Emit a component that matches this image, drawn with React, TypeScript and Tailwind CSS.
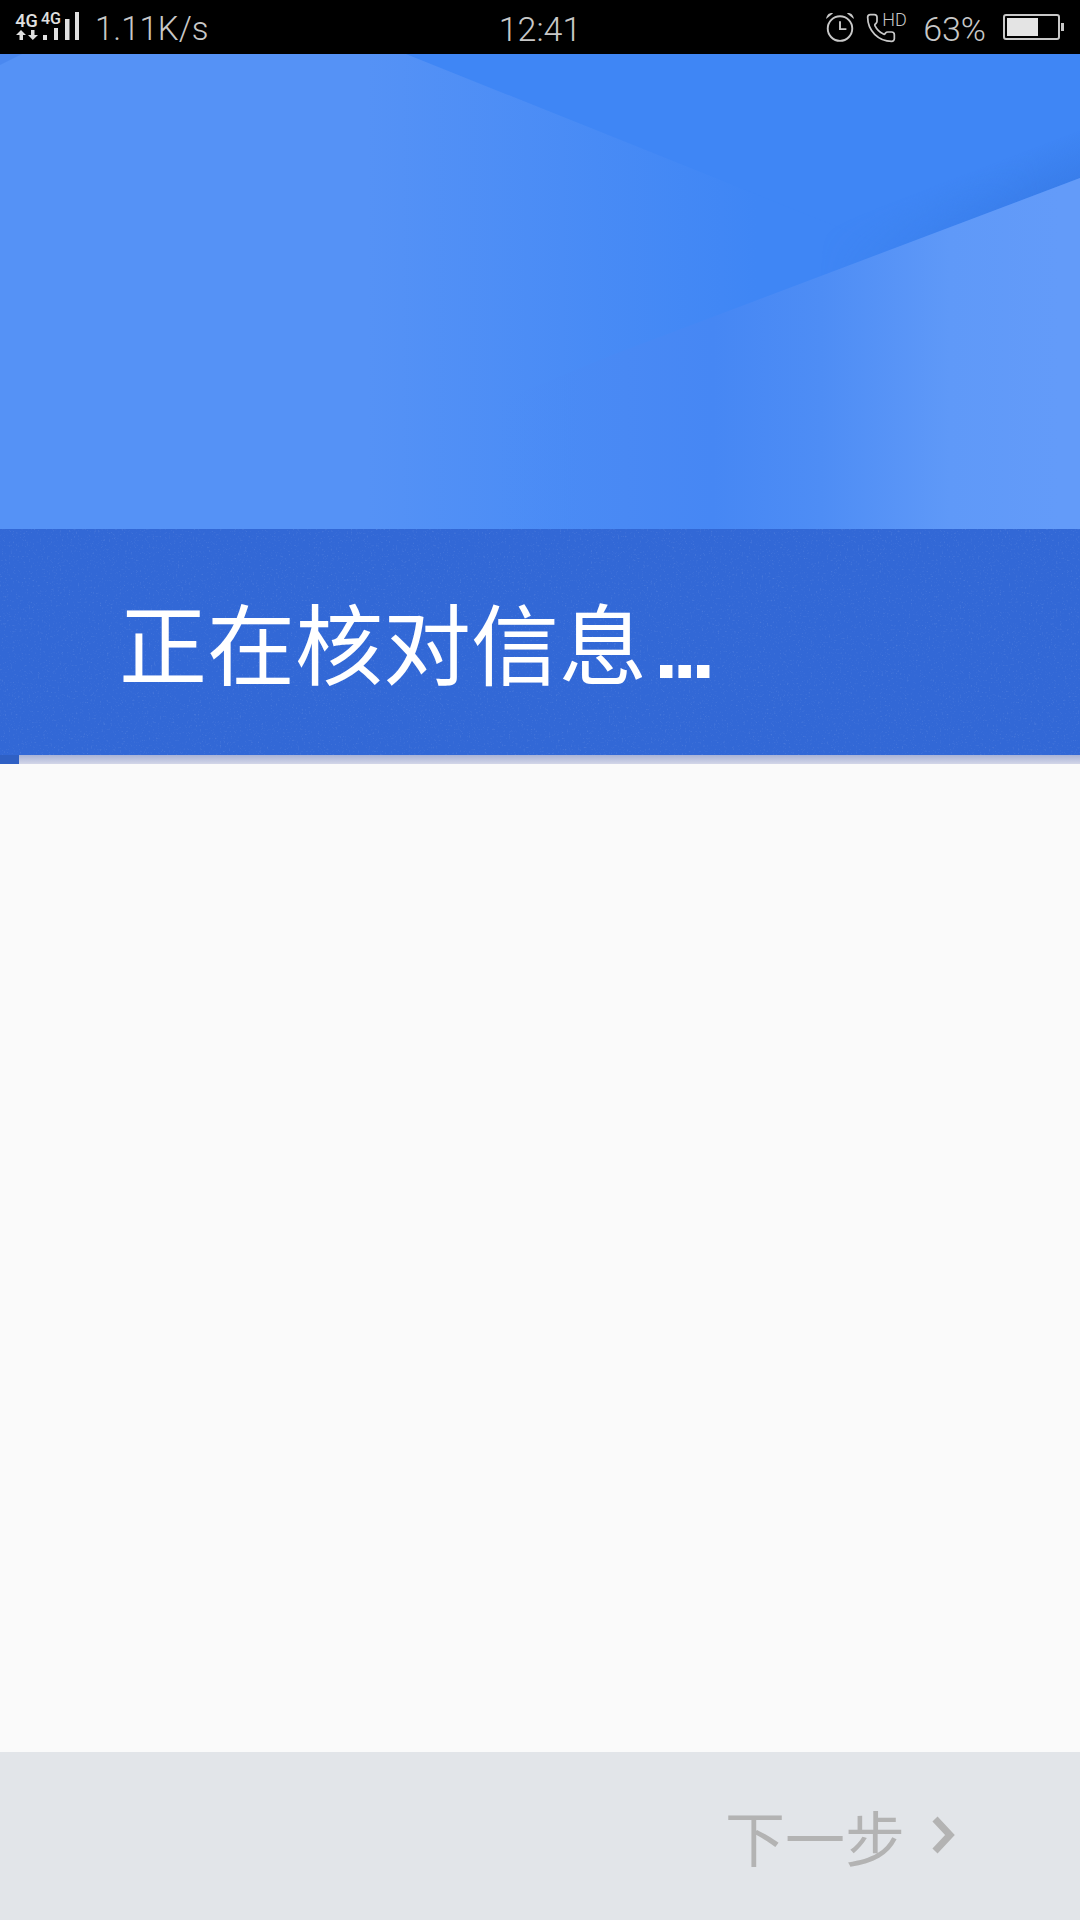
import { Phone } from "lucide-react";

function SignalCluster() {
  return (
    <div className="flex items-start gap-[2px] text-[#e0e0e0] font-['Roboto',sans-serif] font-medium">
      <div className="flex flex-col items-center w-[25px]">
        <span className="text-[18px] leading-[15px] h-[15px]">4G</span>
        <svg width="24" height="12" viewBox="0 0 24 12" className="mt-[1px] block" fill="currentColor">
          <path d="M6 1 L11 6 H8 V11 H4.500 V6 H1 Z" />
          <path d="M16 1 H19.500 V6 H23 L17.800 11 L13 6 H16 Z" />
        </svg>
      </div>
      <div className="flex flex-col w-[40px] -mt-[1px] relative">
        <span className="text-[16px] leading-[12px] h-[12px] absolute left-0 top-[1px]">4G</span>
        <svg width="40" height="28" viewBox="0 0 40 28" className="block" fill="currentColor">
          <rect x="2" y="23" width="4" height="5" />
          <rect x="13" y="16" width="4" height="12" />
          <rect x="24" y="7" width="4.500" height="21" />
          <rect x="34" y="0" width="4" height="28" />
        </svg>
      </div>
    </div>
  );
}

function AlarmIcon() {
  return (
    <svg width="32" height="32" viewBox="0 0 30 30" fill="none" stroke="#c8c8c8" strokeWidth="1.800">
      <circle cx="15" cy="16.500" r="11.500" />
      <path d="M15 9.500 V17 H21" />
      <path d="M2 7.500 C2.500 3.500 5 1.500 8.500 2 Z" fill="#c8c8c8" stroke="none" />
      <path d="M28 7.500 C27.500 3.500 25 1.500 21.500 2 Z" fill="#c8c8c8" stroke="none" />
    </svg>
  );
}

export default function App() {
  return (
    <div className="w-[1080px] h-[1920px] flex flex-col bg-[#fafafa] overflow-hidden font-['Noto_Sans_CJK_SC',sans-serif]">
      {/* status bar */}
      <div className="h-[54px] shrink-0 bg-black grid grid-cols-[1fr_auto_1fr] items-center text-[#c8c8c8] font-['Roboto',sans-serif] font-light">
        <div className="flex items-center pl-[14px]">
          <SignalCluster />
          <span className="text-[33px] leading-none ml-[14px] mt-[3px]">1.11K/s</span>
        </div>
        <span className="text-[34px] leading-none mt-[3px]">12:41</span>
        <div className="flex items-center justify-end pr-[16px]">
          <AlarmIcon />
          <div className="relative w-[42px] h-[30px] ml-[11px]">
            <Phone size={32} strokeWidth={1.3} color="#c8c8c8" className="absolute -left-[2px] top-0 -scale-x-100 rotate-90" />
            <span className="absolute left-[15px] -top-[1px] text-[18px] leading-[18px]">HD</span>
          </div>
          <span className="text-[34px] leading-none ml-[14px] mt-[3px]">63%</span>
          <div className="flex items-center ml-[17px]">
            <div className="w-[57px] h-[26px] border-2 border-[#c8c8c8] rounded-[3px] p-[2px]">
              <div className="w-[31px] h-full bg-[#e4e4e4]" />
            </div>
            <div className="w-[3px] h-[8px] bg-[#c8c8c8] ml-[1px]" />
          </div>
        </div>
      </div>

      {/* hero artwork */}
      <svg className="block shrink-0" width="1080" height="475" viewBox="0 0 1080 475">
        <defs>
          <linearGradient id="base" gradientUnits="userSpaceOnUse" x1="0" y1="0" x2="1080" y2="0">
            <stop offset="0.34" stopColor="#5592f6" />
            <stop offset="0.7" stopColor="#3f86f5" />
          </linearGradient>
          <linearGradient id="lower" gradientUnits="userSpaceOnUse" x1="0" y1="0" x2="1080" y2="0">
            <stop offset="0.46" stopColor="#4c8cf5" stopOpacity="0" />
            <stop offset="0.58" stopColor="#4989f4" />
            <stop offset="0.66" stopColor="#4687f4" />
            <stop offset="0.76" stopColor="#4e8df5" />
            <stop offset="0.88" stopColor="#5f99f8" />
            <stop offset="0.98" stopColor="#639bf9" />
          </linearGradient>
          <linearGradient id="crease" gradientUnits="userSpaceOnUse" x1="1046" y1="89" x2="1062" y2="131">
            <stop offset="0" stopColor="#2f6fd8" stopOpacity="0" />
            <stop offset="1" stopColor="#2f6fd8" stopOpacity="0.35" />
          </linearGradient>
          <linearGradient id="creaseFade" gradientUnits="userSpaceOnUse" x1="820" y1="0" x2="1040" y2="0">
            <stop offset="0" stopColor="#000000" />
            <stop offset="1" stopColor="#ffffff" />
          </linearGradient>
          <mask id="creaseMask" maskUnits="userSpaceOnUse" x="0" y="0" width="1080" height="475">
            <rect width="1080" height="475" fill="url(#creaseFade)" />
          </mask>
        </defs>
        <rect width="1080" height="475" fill="url(#base)" />
        <polygon points="406,0 1080,0 1080,124 893,195" fill="#3f86f5" />
        <polygon points="1080,40 1080,124 800,230 800,40" fill="url(#crease)" mask="url(#creaseMask)" />
        <polygon points="0,0 22,0 0,11" fill="#4a88f0" />
        <polygon points="1080,124 612,301 480,355 480,475 1080,475" fill="url(#lower)" />
      </svg>

      {/* title band */}
      <div className="relative h-[226px] shrink-0 bg-[#3268d6] flex items-center pl-[119px] overflow-hidden">
        <svg className="absolute inset-0" width="1080" height="226">
          <filter id="speck">
            <feTurbulence type="fractalNoise" baseFrequency="0.55" numOctaves="2" seed="4" />
            <feColorMatrix values="0 0 0 0 1  0 0 0 0 1  0 0 0 0 1  0 0 0 1.6 -0.95" />
          </filter>
          <rect width="1080" height="226" filter="url(#speck)" opacity="0.22" />
        </svg>
        <span className="relative text-white text-[88px] leading-none mt-[3px] font-normal">
          正在核对信息<span className="font-['Liberation_Sans',sans-serif] font-bold tracking-[-6px] ml-[7px]">...</span>
        </span>
      </div>

      {/* progress track */}
      <div className="h-[9px] shrink-0 bg-gradient-to-b from-[#a9b3d6] to-[#d3d6e8]">
        <div className="w-[19px] h-full bg-[#2f60c4]" />
      </div>

      <main className="flex-1 bg-[#fafafa]" />

      {/* footer */}
      <div className="h-[168px] shrink-0 bg-[#e2e5e9] flex items-center justify-end pr-[124px] text-[#b3b3b3]">
        <span className="text-[60px] leading-none">下一步</span>
        <svg width="26" height="40" viewBox="0 0 26 40" fill="none" stroke="#b3b3b3" strokeWidth="7" className="ml-[25px]">
          <path d="M5 3 L20 19 L5 35" />
        </svg>
      </div>
    </div>
  );
}
